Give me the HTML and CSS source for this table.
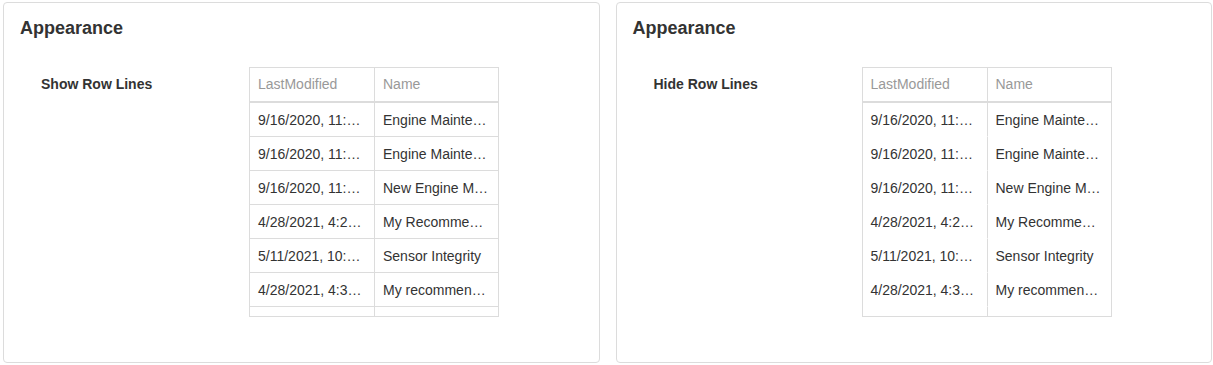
FILE: index.html
```html
<!DOCTYPE html>
<html>
<head>
<meta charset="utf-8">
<link rel="stylesheet" href="styles.css">
</head>
<body>
  <section class="card">
    <h2 class="title">Appearance</h2>
    <div class="demo">
      <div class="label">Show Row Lines</div>
      <div class="grid lines">
        <div class="hcell">LastModified</div><div class="hcell">Name</div>
        <div class="cell">9/16/2020, 11:42:13 AM</div><div class="cell">Engine Maintenance</div>
        <div class="cell">9/16/2020, 11:45:02 AM</div><div class="cell">Engine Maintenance</div>
        <div class="cell">9/16/2020, 11:51:37 AM</div><div class="cell">New Engine Model</div>
        <div class="cell">4/28/2021, 4:25:10 PM</div><div class="cell">My Recommendations</div>
        <div class="cell">5/11/2021, 10:03:22 AM</div><div class="cell">Sensor Integrity</div>
        <div class="cell">4/28/2021, 4:31:45 PM</div><div class="cell">My recommendations</div>
        <div class="cell"></div><div class="cell"></div>
      </div>
    </div>
  </section>
  <section class="card">
    <h2 class="title">Appearance</h2>
    <div class="demo">
      <div class="label">Hide Row Lines</div>
      <div class="grid">
        <div class="hcell">LastModified</div><div class="hcell">Name</div>
        <div class="cell">9/16/2020, 11:42:13 AM</div><div class="cell">Engine Maintenance</div>
        <div class="cell">9/16/2020, 11:45:02 AM</div><div class="cell">Engine Maintenance</div>
        <div class="cell">9/16/2020, 11:51:37 AM</div><div class="cell">New Engine Model</div>
        <div class="cell">4/28/2021, 4:25:10 PM</div><div class="cell">My Recommendations</div>
        <div class="cell">5/11/2021, 10:03:22 AM</div><div class="cell">Sensor Integrity</div>
        <div class="cell">4/28/2021, 4:31:45 PM</div><div class="cell">My recommendations</div>
        <div class="cell"></div><div class="cell"></div>
      </div>
    </div>
  </section>
</body>
</html>
```

FILE: styles.css
```css
html, body {
  margin: 0;
  background: #fff;
}
body {
  display: flex;
  gap: 16px;
  padding: 2px 1px 0 3px;
  font-family: "Liberation Sans", Arial, sans-serif;
  color: #333;
}
.card {
  flex: 1;
  height: 361px;
  box-sizing: border-box;
  border: 1px solid #dcdcdc;
  border-radius: 4px;
  padding: 15px 16px 14px;
}
.title {
  margin: 0;
  font-size: 18px;
  line-height: 20px;
  font-weight: bold;
  color: #333;
}
.demo {
  display: flex;
  align-items: flex-start;
  margin-top: 29px;
}
.label {
  width: 208px;
  margin-left: 21px;
  font-size: 14px;
  font-weight: bold;
  line-height: 34px;
  color: #333;
}
.grid {
  width: 250px;
  height: 250px;
  box-sizing: border-box;
  border: 1px solid #dcdcdc;
  overflow: hidden;
  display: grid;
  grid-template-columns: 125px 1fr;
  grid-template-rows: 35px;
  grid-auto-rows: 34px;
  font-size: 14px;
}
.hcell, .cell {
  display: block;
  box-sizing: border-box;
  padding: 0 8px;
  white-space: nowrap;
  overflow: hidden;
  text-overflow: ellipsis;
  min-width: 0;
}
.hcell {
  color: #999;
  line-height: 32px;
  border-bottom: 2px solid #dcdcdc;
}
.cell {
  color: #333;
  padding-top: 1px;
  line-height: 32px;
  border-bottom: 1px solid transparent;
}
.lines .cell {
  border-bottom-color: #dcdcdc;
}
.hcell:nth-child(odd), .cell:nth-child(odd) {
  border-right: 1px solid #dcdcdc;
}
```
